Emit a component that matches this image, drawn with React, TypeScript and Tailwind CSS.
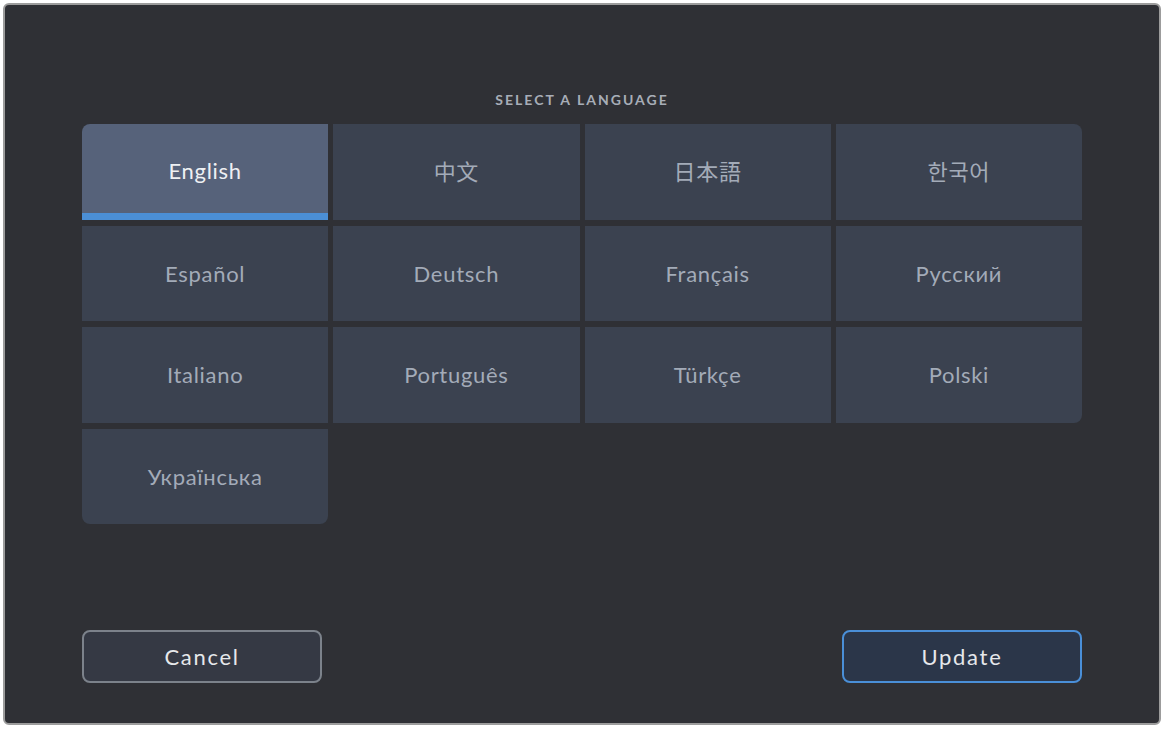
const langs = [
  { label: "English", font: "", round: "rounded-tl-lg" },
  { label: "中文", font: "font-['Lato','Noto_Sans_CJK_SC',sans-serif]", round: "" },
  { label: "日本語", font: "font-['Lato','Noto_Sans_CJK_JP',sans-serif]", round: "" },
  { label: "한국어", font: "font-['Lato','Noto_Sans_CJK_KR',sans-serif]", round: "rounded-tr-lg" },
  { label: "Español", font: "", round: "" },
  { label: "Deutsch", font: "", round: "" },
  { label: "Français", font: "", round: "" },
  { label: "Русский", font: "", round: "" },
  { label: "Italiano", font: "", round: "" },
  { label: "Português", font: "", round: "" },
  { label: "Türkçe", font: "", round: "" },
  { label: "Polski", font: "", round: "rounded-br-lg" },
  { label: "Українська", font: "", round: "rounded-b-lg" },
];

export default function App() {
  const selected = "English";

  return (
    <div className="w-[1164px] h-[729px] bg-white p-[3px] font-['Lato','Noto_Sans',sans-serif]">
      <div className="w-[1158px] h-[722px] rounded-md border-2 border-[#9c9c9c] bg-[#2f3035] flex flex-col items-center">
        <div className="mt-[87px] h-4 leading-4 text-[14px] font-bold tracking-[2px] text-[#a7adb7]">
          SELECT A LANGUAGE
        </div>

        <div className="mt-[16px] w-[1000px] grid grid-cols-4 gap-x-[5px] gap-y-[6px]">
          {langs.map((l) => {
            const active = l.label === selected;
            return (
              <div
                key={l.label}
                className={`relative h-[95.5px] flex items-center justify-center text-[22px] tracking-[0.7px] ${l.round} ${l.font} ${
                  active ? "bg-[#56627a] text-[#eef0f3] pb-[3px]" : "bg-[#3b4250] text-[#a3abb8]"
                }`}
              >
                {l.label}
                {active && <div className="absolute left-0 right-0 bottom-0 h-[7px] bg-[#4b8fd6]" />}
              </div>
            );
          })}
        </div>

        <div className="mt-[106px] w-[1000px] flex justify-between">
          <button className="w-[240px] h-[53px] rounded-lg border-2 border-[#7c828b] bg-[#353944] text-[22px] tracking-[1.7px] text-[#e6e8eb]">
            Cancel
          </button>
          <button className="w-[240px] h-[53px] rounded-lg border-2 border-[#4a8fd8] bg-[#2b3649] text-[22px] tracking-[1.7px] text-[#e6e8eb]">
            Update
          </button>
        </div>
      </div>
    </div>
  );
}
